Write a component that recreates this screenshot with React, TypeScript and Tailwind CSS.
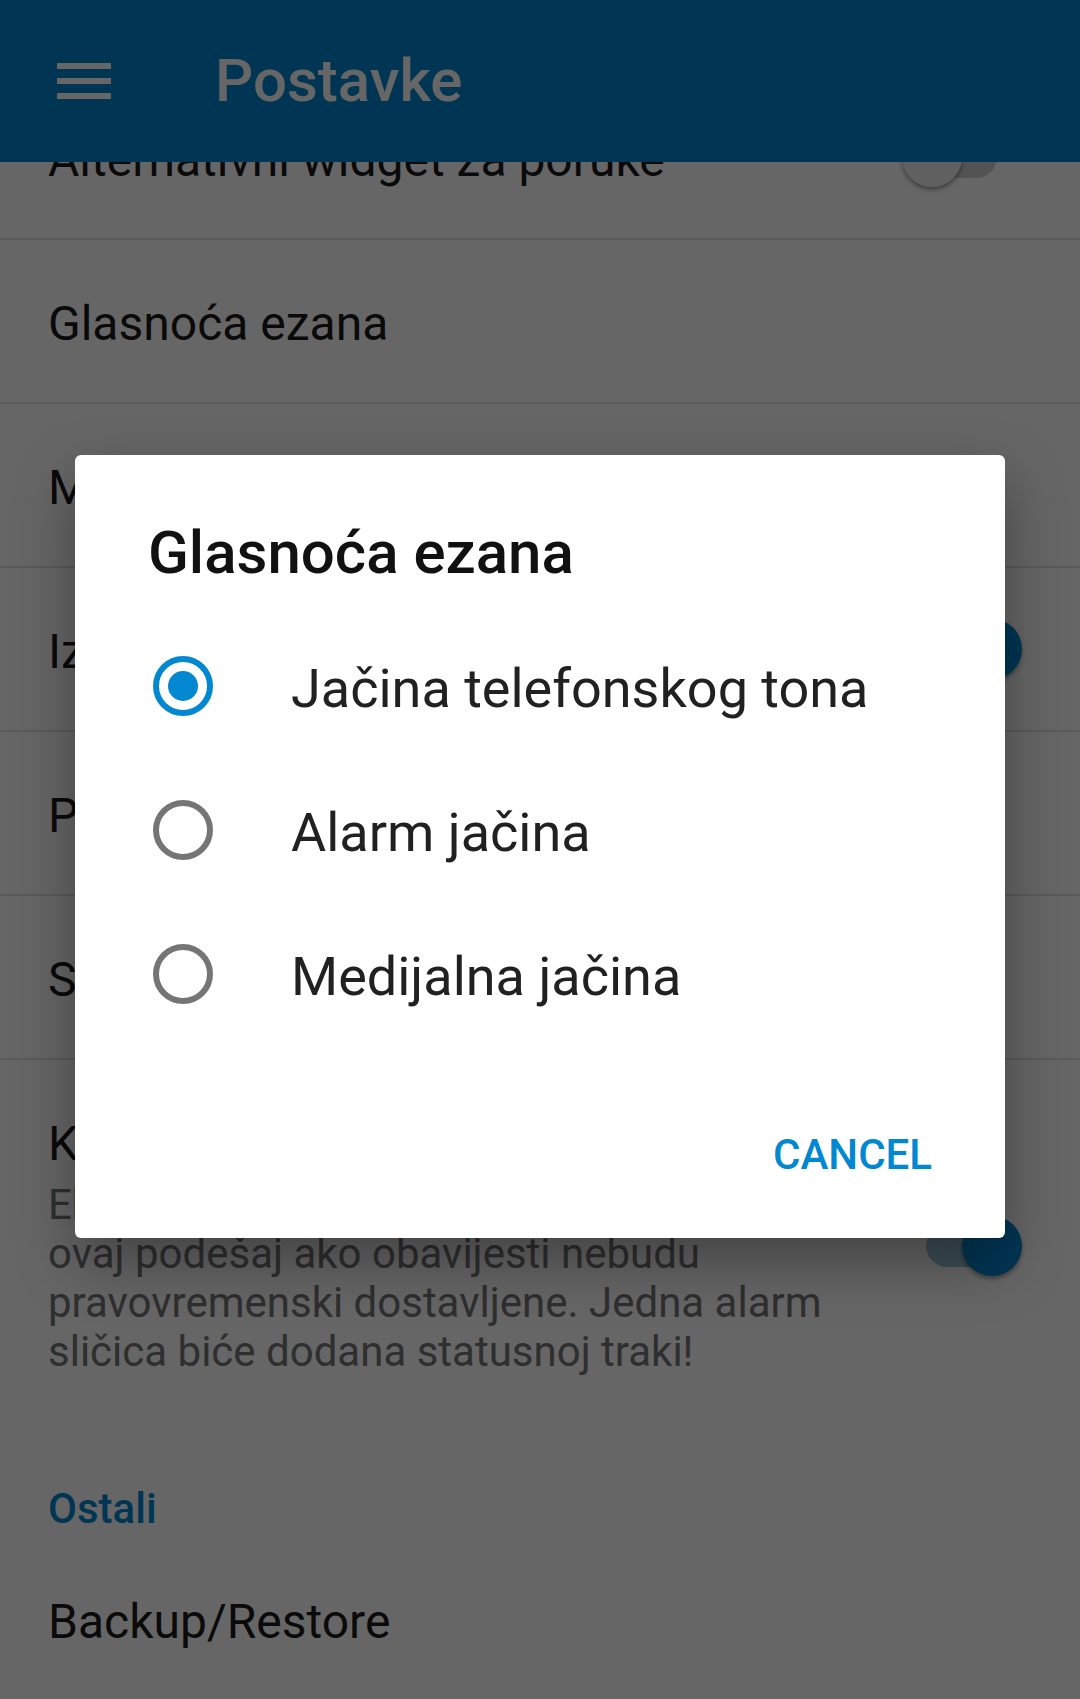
import React from "react";

function Switch({ on }: { on: boolean }) {
  return (
    <div className="relative h-[60px] w-[120px] shrink-0">
      <div
        className={[
          "absolute left-[24px] top-[9px] h-[42px] w-[71px] rounded-full",
          on ? "bg-[#9cc3da]" : "bg-[#cfcfcf]",
        ].join(" ")}
      />
      <div
        className={[
          "absolute top-0 h-[60px] w-[60px] rounded-full shadow-[0_3px_4px_rgba(0,0,0,0.35)]",
          on ? "left-[60px] bg-[#0288d1]" : "left-0 bg-[#f1f1f1]",
        ].join(" ")}
      />
    </div>
  );
}

function Row({ title, toggle }: { title: string; toggle?: boolean }) {
  return (
    <div className="flex h-[164px] items-center justify-between border-b-2 border-[#e2e2e2] pl-[48px] pr-[58px]">
      <span className="mt-[6px] text-[48px] leading-[56px] text-[#1a1a1a]">{title}</span>
      {toggle !== undefined && <Switch on={toggle} />}
    </div>
  );
}

function Radio({ label, checked }: { label: string; checked?: boolean }) {
  return (
    <div className="flex h-[144px] items-center pl-[78px]">
      <div
        className={[
          "flex h-[60px] w-[60px] shrink-0 items-center justify-center rounded-full border-[6px]",
          checked ? "border-[#0288d1]" : "border-[#757575]",
        ].join(" ")}
      >
        {checked && <div className="h-[30px] w-[30px] rounded-full bg-[#0288d1]" />}
      </div>
      <span className="ml-[78px] mt-[5px] text-[54px] leading-[64px] text-[#212121]">{label}</span>
    </div>
  );
}

export default function App() {
  return (
    <div className="relative h-[1699px] w-[1080px] overflow-hidden bg-white font-[Roboto,sans-serif]">
      <header className="relative z-10 flex h-[162px] items-center bg-[#0288d1] pl-[57px]">
        <div className="flex h-[36px] w-[54px] flex-col justify-between">
          <div className="h-[6px] bg-white" />
          <div className="h-[6px] bg-white" />
          <div className="h-[6px] bg-white" />
        </div>
        <h1 className="ml-[104px] text-[60px] font-medium leading-[70px] text-white">Postavke</h1>
      </header>

      {/* list is scrolled: first row sits partly under the app bar */}
      <div className="-mt-[86px]">
        <Row title="Alternativni widget za poruke" toggle={false} />
        <Row title="Glasnoća ezana" />
        <Row title="Muezin" />
        <Row title="Izgled" toggle={true} />
        <Row title="Podsjetnik" />
        <Row title="Sabah" />

        <div className="flex items-center justify-between pb-[48px] pl-[48px] pr-[58px] pt-[56px]">
          <div>
            <div className="text-[48px] leading-[56px] text-[#1a1a1a]">Kompatibilni način</div>
            <div className="mt-[8px] text-[42px] leading-[49px] text-[#757575]">
              Eksperimentalno. Uključite
              <br />
              ovaj podešaj ako obavijesti nebudu
              <br />
              pravovremenski dostavljene. Jedna alarm
              <br />
              sličica biće dodana statusnoj traki!
            </div>
          </div>
          <Switch on={true} />
        </div>

        <div className="pl-[48px] pt-[60px] text-[42px] font-medium leading-[49px] text-[#0288d1]">Ostali</div>
        <div className="mt-[61px] pl-[48px] text-[48px] leading-[56px] text-[#1a1a1a]">Backup/Restore</div>
      </div>

      <div className="absolute inset-0 z-20 bg-black/60" />

      <div className="absolute left-[75px] top-[455px] z-30 h-[783px] w-[930px] rounded-[6px] bg-white shadow-[0_24px_60px_rgba(0,0,0,0.35)]">
        <h2 className="pl-[73px] pt-[63px] text-[60px] font-medium leading-[70px] text-[#111]">Glasnoća ezana</h2>
        <div className="mt-[26px]">
          <Radio label="Jačina telefonskog tona" checked />
          <Radio label="Alarm jačina" />
          <Radio label="Medijalna jačina" />
        </div>
        <div className="flex justify-end pr-[73px] pt-[84px]">
          <span className="text-[42px] font-medium leading-[49px] text-[#0288d1]">CANCEL</span>
        </div>
      </div>
    </div>
  );
}
